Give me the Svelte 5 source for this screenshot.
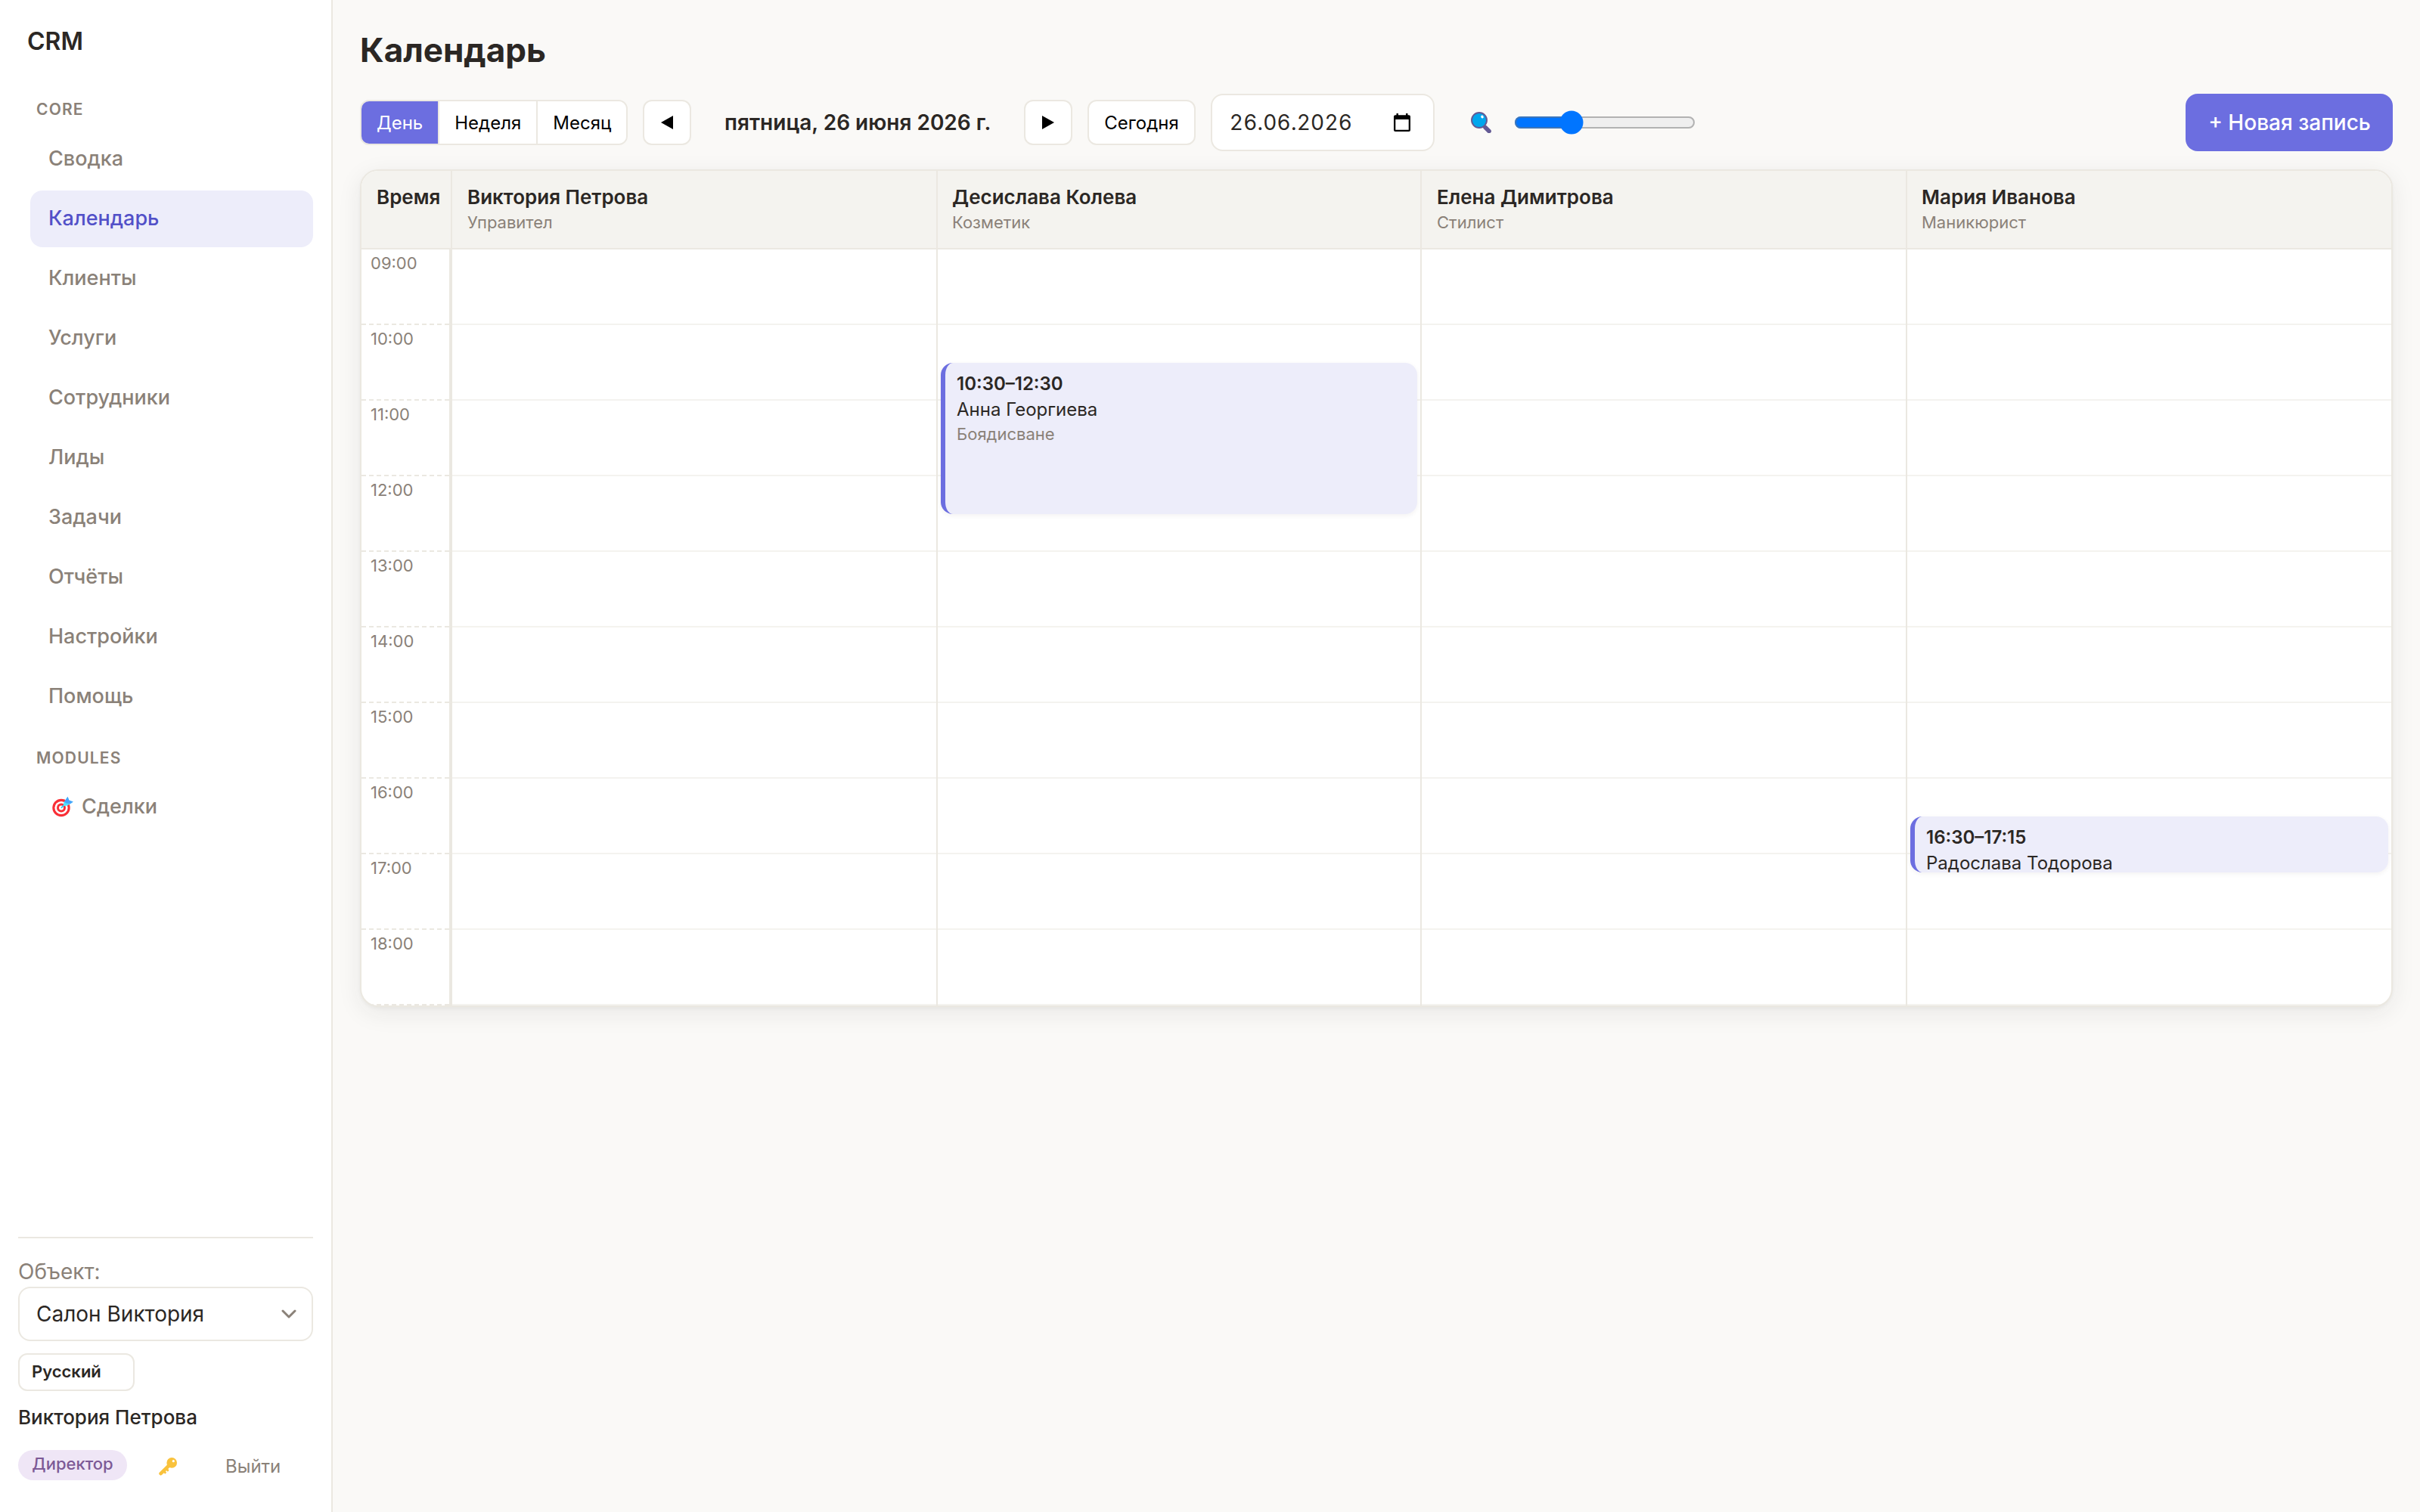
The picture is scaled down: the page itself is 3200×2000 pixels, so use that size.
<script>
    const core = ['Сводка', 'Календарь', 'Клиенты', 'Услуги', 'Сотрудники', 'Лиды', 'Задачи', 'Отчёты', 'Настройки', 'Помощь'];
    const views = ['День', 'Неделя', 'Месяц'];
    const hours = ['09:00', '10:00', '11:00', '12:00', '13:00', '14:00', '15:00', '16:00', '17:00', '18:00'];
    const hourHeight = 100;
    const dayStart = 9;

    const staff = [
        { name: 'Виктория Петрова', role: 'Управител', events: [] },
        {
            name: 'Десислава Колева',
            role: 'Козметик',
            events: [{ from: '10:30', to: '12:30', client: 'Анна Георгиева', service: 'Боядисване' }]
        },
        { name: 'Елена Димитрова', role: 'Стилист', events: [] },
        {
            name: 'Мария Иванова',
            role: 'Маникюрист',
            events: [{ from: '16:30', to: '17:15', client: 'Радослава Тодорова', service: '' }]
        }
    ];

    let page = 'Календарь';
    let view = 'День';
    let scale = 29;

    const toHours = (time) => {
        const [h, m] = time.split(':').map(Number);
        return h + m / 60;
    }

    const top = (event) => (toHours(event.from) - dayStart) * hourHeight;
    const height = (event) => Math.floor((toHours(event.to) - toHours(event.from)) * hourHeight / 2) * 2;
</script>

<div class="app">
    <aside>
        <div class="brand">CRM</div>

        <nav>
            <div class="group">Core</div>
            {#each core as item}
                <a href="#{item}" class:active={page === item} on:click={() => page = item}>{item}</a>
            {/each}
            <div class="group modules">Modules</div>
            <a href="#deals">
                <svg class="target" viewBox="0 0 28 28">
                    <circle cx="12" cy="15.5" r="11.7" fill="#f92f37" />
                    <circle cx="12" cy="15.5" r="8.6" fill="#fff" />
                    <circle cx="12" cy="15.5" r="6" fill="#f92f37" />
                    <circle cx="12" cy="15.5" r="3" fill="#fff" />
                    <path d="M12.5 15.2 19 8.6" stroke="#26c9fc" stroke-width="1.8" stroke-linecap="round" />
                    <path d="M14.8 13.2 15.4 8.2 20.5 1 22.4 5.8 27.5 7.8 20.3 12.6Z" fill="#50e2ff" />
                    <path d="M16 7.6 20.5.8 22.4 5.6 27.8 7.6 24 10.3 18.6 9.6Z" fill="#46a4fb" />
                </svg>
                Сделки
            </a>
        </nav>

        <div class="account">
            <div class="muted">Объект:</div>
            <div class="select">
                Салон Виктория
                <svg class="chevron" viewBox="0 0 20 12"><path d="M2 2l8 8 8-8" /></svg>
            </div>
            <div class="lang">Русский</div>
            <div class="user">Виктория Петрова</div>
            <div class="user-row">
                <span class="badge">Директор</span>
                <svg class="key" viewBox="0 0 24 24">
                    <path d="M14 10 2.6 21.2" stroke="#f9c23c" stroke-width="4.6" stroke-linecap="round" />
                    <path d="M6.8 18.2l1.6 1.6M10 15l1.8 1.8" stroke="#f9c23c" stroke-width="3" stroke-linecap="round" />
                    <circle cx="17.2" cy="6.9" r="6.8" fill="#f9c23c" />
                    <circle cx="19.3" cy="4.7" r="1.6" fill="#fff" />
                </svg>
                <button class="logout">Выйти</button>
            </div>
        </div>
    </aside>

    <main>
        <h1>Календарь</h1>

        <div class="toolbar">
            <div class="views">
                {#each views as item}
                    <button class:active={view === item} on:click={() => view = item}>{item}</button>
                {/each}
            </div>
            <button class="arrow" aria-label="Назад">
                <svg viewBox="0 0 16 18"><path d="M16 0v18L0 9z" /></svg>
            </button>
            <strong>пятница, 26 июня 2026 г.</strong>
            <button class="arrow" aria-label="Вперёд">
                <svg viewBox="0 0 16 18"><path d="M0 0v18l16-9z" /></svg>
            </button>
            <button class="today">Сегодня</button>
            <div class="date">
                26.06.2026
                <svg viewBox="0 0 22 24">
                    <path fill-rule="evenodd" d="M3.5 0h2.5v2.3h10V0h2.5v2.3H20a2 2 0 0 1 2 2V22a2 2 0 0 1-2 2H2a2 2 0 0 1-2-2V4.3a2 2 0 0 1 2-2h1.5zM2.3 8v13.7h17.4V8z" />
                </svg>
            </div>
            <svg class="lens" viewBox="0 0 28 28">
                <path d="M19 20.5l5 5" stroke="#635994" stroke-width="5.6" stroke-linecap="round" />
                <circle cx="11" cy="11" r="10" fill="#00a6ed" stroke="#635994" stroke-width="1.9" />
                <ellipse cx="15" cy="6.6" rx="1.7" ry="2" transform="rotate(-30 15 6.6)" fill="#fff" />
            </svg>
            <input class="scale" type="range" min="0" max="100" bind:value={scale} aria-label="Масштаб">
            <button class="create">+ Новая запись</button>
        </div>

        <section class="calendar">
            <header>
                <div class="time-head">Время</div>
                {#each staff as person}
                    <div class="person">
                        <div class="name">{person.name}</div>
                        <div class="role">{person.role}</div>
                    </div>
                {/each}
            </header>
            <div class="body">
                <div class="hours">
                    {#each hours as hour}
                        <div class="hour">{hour}</div>
                    {/each}
                </div>
                {#each staff as person}
                    <div class="column">
                        {#each hours as hour}
                            <div class="slot"></div>
                        {/each}
                        {#each person.events as event}
                            <div class="event" style="top: {top(event)}px; height: {height(event)}px">
                                <div class="event-time">{event.from}–{event.to}</div>
                                <div class="client">{event.client}</div>
                                <div class="service">{event.service}</div>
                            </div>
                        {/each}
                    </div>
                {/each}
            </div>
        </section>
    </main>
</div>

<style>
    :global(body) {
        background: #faf9f7;
    }

    .app {
        display: flex;
        height: 2000px;
        font-family: Inter, "Liberation Sans", sans-serif;
        font-size: 28px;
        color: #2b2724;
    }

    .app, .app * {
        box-sizing: border-box;
    }

    button {
        font-family: inherit;
        font-size: 24px;
        color: #000;
        background: #fff;
        border: 2px solid #ebe8e1;
        border-radius: 12px;
        height: 60px;
        padding: 0 20px;
        white-space: nowrap;
    }

    svg {
        flex: none;
    }

    aside {
        display: flex;
        flex-direction: column;
        flex: none;
        width: 440px;
        padding: 29px 24px 42px;
        background: #fff;
        border-right: 2px solid #ebe8e1;
    }

    .brand {
        padding-left: 12px;
        font-size: 32px;
        font-weight: 600;
        line-height: 52px;
    }

    nav {
        padding: 47px 0 0 16px;
    }

    .group {
        margin-bottom: 11px;
        padding-left: 8px;
        font-size: 21px;
        font-weight: 600;
        line-height: 34px;
        letter-spacing: 0.055em;
        text-transform: uppercase;
        color: #8a8178;
    }

    .modules {
        margin-top: 26px;
    }

    nav a {
        display: flex;
        align-items: center;
        height: 75.2px;
        margin-bottom: 3.9px;
        padding: 0 24px 3px;
        border-radius: 16px;
        font-size: 27px;
        font-weight: 500;
        color: #8a8178;
        text-decoration: none;
    }

    nav a.active {
        background: #ededfa;
        color: #5250c8;
    }

    .target {
        width: 28px;
        height: 28px;
        margin: 0 11px 0 5px;
    }

    .account {
        margin-top: auto;
        padding-top: 22px;
        border-top: 2px solid #ebe8e1;
    }

    .muted {
        height: 42px;
        line-height: 44px;
        color: #8a8178;
    }

    .select {
        display: flex;
        align-items: center;
        justify-content: space-between;
        height: 72px;
        padding: 0 20px 0 22px;
        border: 2px solid #ebe8e1;
        border-radius: 16px;
    }

    .chevron {
        width: 20px;
        height: 12px;
        fill: none;
        stroke: #8a8178;
        stroke-width: 3;
        stroke-linecap: round;
        stroke-linejoin: round;
    }

    .lang {
        width: 154px;
        height: 50px;
        margin-top: 16px;
        padding-left: 16px;
        border: 2px solid #ebe8e1;
        border-radius: 12px;
        font-size: 22px;
        font-weight: 600;
        line-height: 44px;
    }

    .user {
        margin-top: 14px;
        font-size: 26px;
        font-weight: 500;
        line-height: 42px;
    }

    .user-row {
        display: flex;
        align-items: center;
        height: 40px;
        margin-top: 22px;
    }

    .badge {
        width: 144px;
        height: 40px;
        border-radius: 20px;
        background: #efe6f6;
        color: #7d5a96;
        font-size: 22px;
        font-weight: 500;
        line-height: 36px;
        text-align: center;
    }

    .key {
        width: 24px;
        height: 24px;
        margin: 3px 64px 0 42px;
    }

    .logout {
        height: 40px;
        padding: 2px 0 0;
        border: none;
        background: none;
        color: #8a8178;
    }

    main {
        flex: 1;
        min-width: 0;
        padding: 36px;
    }

    h1 {
        margin: 0;
        font-size: 44px;
        font-weight: 700;
        line-height: 60px;
    }

    .toolbar {
        display: flex;
        align-items: center;
        gap: 20px;
        height: 76px;
        margin: 28px 0 24px;
    }

    .views {
        display: flex;
        height: 60px;
        border: 2px solid #ebe8e1;
        border-radius: 12px;
        overflow: hidden;
    }

    .views button {
        height: 56px;
        border-width: 0 2px 0 0;
        border-radius: 0;
    }

    .views button:last-child {
        border-right: none;
    }

    .views button.active {
        background: #6c6ee0;
        color: #fff;
    }

    .arrow {
        display: flex;
        align-items: center;
        justify-content: center;
        width: 64px;
        padding: 0;
    }

    .arrow svg {
        width: 16px;
        height: 18px;
    }

    strong {
        width: 400px;
        font-weight: 600;
        text-align: center;
        white-space: nowrap;
    }

    .date {
        display: flex;
        align-items: center;
        justify-content: space-between;
        width: 296px;
        height: 76px;
        padding: 0 30px 0 23px;
        background: #fff;
        border: 2px solid #ebe8e1;
        border-radius: 16px;
        font-variant-numeric: tabular-nums;
        letter-spacing: 0.2px;
    }

    .date svg {
        width: 22px;
        height: 24px;
    }

    .lens {
        width: 28px;
        height: 28px;
        margin-left: 28px;
    }

    .scale {
        zoom: 2;
        width: 120px;
        margin: 0 0 0 4.5px;
    }

    .create {
        width: 274px;
        height: 76px;
        margin-left: auto;
        padding: 0 0 0 1px;
        border: none;
        border-radius: 16px;
        background: #6c6ee0;
        color: #fff;
        font-size: 28px;
        font-weight: 500;
    }

    .calendar {
        background: #fff;
        border: 2px solid #ebe8e1;
        border-radius: 24px;
        box-shadow: 0 8px 32px rgba(43, 39, 36, 0.08), 0 2px 4px rgba(43, 39, 36, 0.04);
        overflow: hidden;
    }

    header, .body {
        display: grid;
        grid-template-columns: 118px 642px 640px 642px 642px;
    }

    header {
        height: 104px;
        background: #f4f3ef;
        border-bottom: 2px solid #ebe8e1;
        font-size: 26px;
        font-weight: 600;
        line-height: 37px;
    }

    .time-head {
        padding: 16px 0 0 20px;
    }

    .person {
        padding: 16px 20px 0;
        border-left: 2px solid #ebe8e1;
    }

    .person:nth-child(odd) {
        padding-left: 19px;
    }

    .role {
        font-size: 22px;
        font-weight: 400;
        line-height: 30px;
        color: #8a8178;
    }

    .hours {
        border-right: 2px solid #ebe8e1;
    }

    .hour {
        height: 100px;
        padding: 4px 12px;
        border-bottom: 2px dashed #ebe8e1;
        font-size: 22px;
        line-height: 28px;
        color: #8a8178;
    }

    .column {
        position: relative;
        border-left: 2px solid #ebe8e1;
    }

    .slot {
        height: 100px;
        border-bottom: 2px solid #f4f3ef;
    }

    .event {
        position: absolute;
        left: 4px;
        right: 4px;
        padding: 11px 15px;
        background: #ededfa;
        border-left: 6px solid #6c6ee0;
        border-radius: 16px;
        box-shadow: 0 2px 6px rgba(43, 39, 36, 0.06);
        font-size: 24px;
        line-height: 34px;
        overflow: hidden;
    }

    .event-time {
        font-weight: 600;
    }

    .service {
        font-size: 22px;
        line-height: 30px;
        color: #8a8178;
    }
</style>
